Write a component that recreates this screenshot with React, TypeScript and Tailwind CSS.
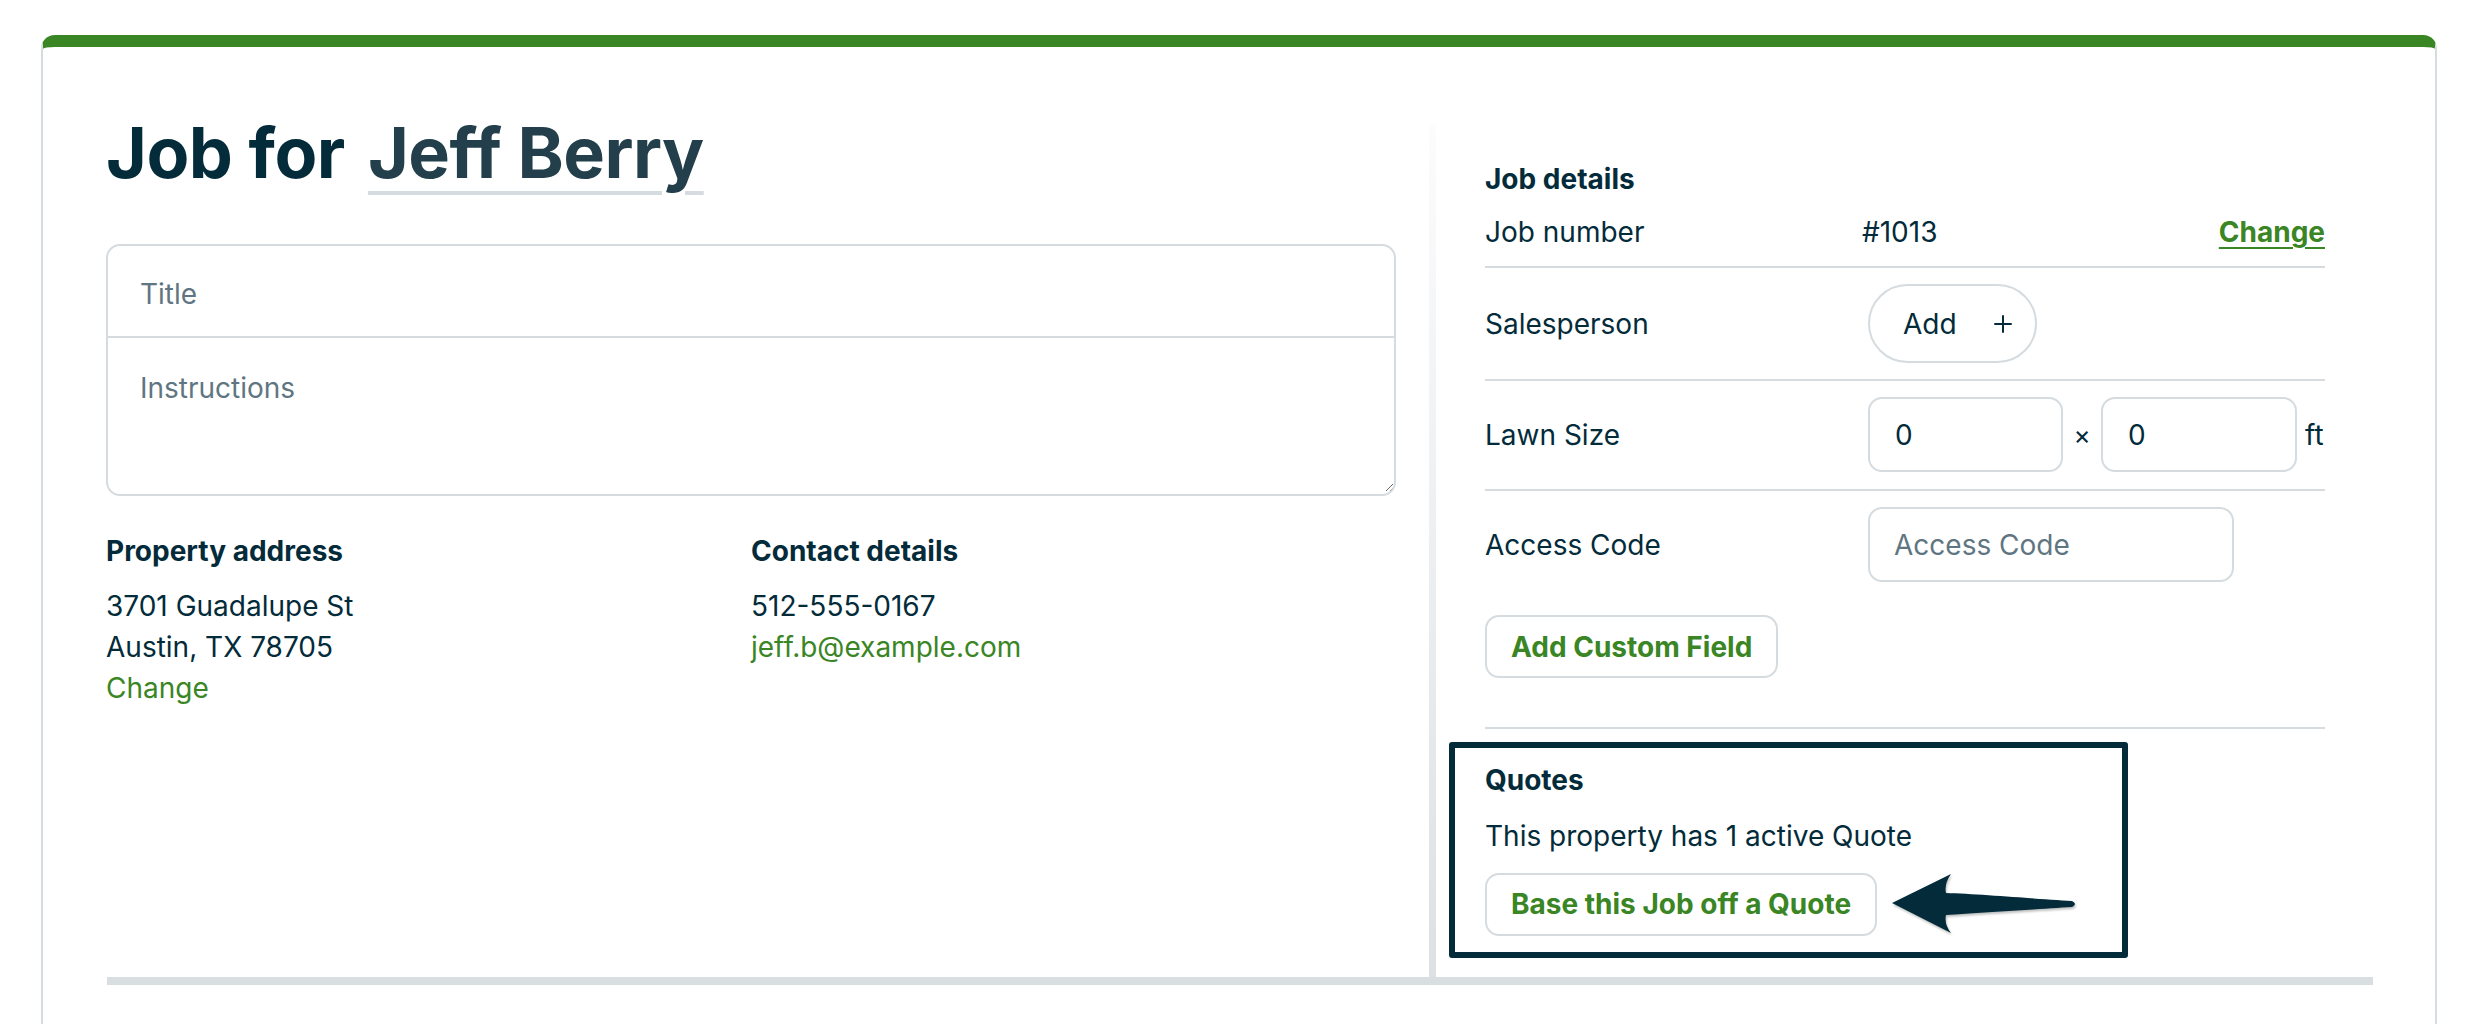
import React from "react";

function Arrow() {
  return (
    <svg width="190" height="64" viewBox="0 0 190 64" className="shrink-0 drop-shadow-[1px_2px_1px_rgba(0,0,0,0.25)]">
      <path
        d="M3 31 L62 2 Q55 12 57 21 C90 22 150 27 183 29 Q189 32 183 35 C150 37 90 41 57 43 Q55 52 62 61 Z"
        fill="#032b3a"
      />
    </svg>
  );
}

function PlusIcon() {
  return (
    <svg width="20" height="20" viewBox="0 0 20 20" className="shrink-0">
      <path d="M10 2 V18 M2 10 H18" stroke="#032b3a" strokeWidth="2" strokeLinecap="round" />
    </svg>
  );
}

export default function App() {
  return (
    <div className="h-[1024px] overflow-hidden bg-white pt-[35px] pl-[41px] pr-[55px] font-[Inter,sans-serif] text-[#032b3a]">
      <div className="min-h-[1100px] rounded-t-[14px] border-x-2 border-t-[12px] border-x-[#d6dbdf] border-t-[#3a8524] bg-white pl-[63px] pr-[62px]">
        <div className="flex">
          {/* Left column */}
          <div className="w-[1290px] shrink-0 pt-[63px]">
            <h1 className="h-[85px] text-[70px] font-bold leading-[85px] tracking-[-0.5px] text-[#032b3a]">
              Job for{" "}
              <span className="ml-[7px] text-[#233f4b] underline decoration-[#d5dbdf] decoration-[4px] underline-offset-[13px]">
                Jeff Berry
              </span>
            </h1>
            <div className="mt-[49px] flex h-[252px] flex-col overflow-hidden rounded-[14px] border-2 border-[#d5dbdf]">
              <input
                placeholder="Title"
                className="h-[92px] w-full shrink-0 border-b-2 border-[#d5dbdf] pl-[32px] pt-[5px] text-[28px] text-[#032b3a] outline-none placeholder:text-[#5f7682]"
              />
              <textarea
                placeholder="Instructions"
                className="h-[154px] w-full px-[32px] pt-[30px] text-[28px] leading-[40px] text-[#032b3a] outline-none placeholder:text-[#5f7682]"
              />
            </div>
            <div className="mt-[35px] grid grid-cols-2 text-[28px] leading-[41px]">
              <div>
                <div className="font-bold">Property address</div>
                <div className="mt-[14px]">3701 Guadalupe St</div>
                <div>Austin, TX 78705</div>
                <div className="text-[#3a8524]">Change</div>
              </div>
              <div>
                <div className="font-bold">Contact details</div>
                <div className="mt-[14px]">512-555-0167</div>
                <div className="text-[#3a8524]">jeff.b@example.com</div>
              </div>
            </div>
          </div>

          <div className="w-[33px] shrink-0" />
          <div className="mt-[78px] w-[7px] shrink-0 bg-gradient-to-b from-[#fcfcfd] to-[#dde1e4]" />

          {/* Right column */}
          <div className="w-[937px] shrink-0 pl-[49px] pr-[48px] pt-[112px] pb-[19px] text-[28px] leading-[40px]">
            <div className="font-bold">Job details</div>

            <div className="flex items-center border-b-2 border-[#d5dbdf] pt-[13px] pb-[14px]">
              <div className="w-[383px] shrink-0">Job number</div>
              <div className="-ml-[6px] flex-1">#1013</div>
              <div className="font-bold text-[#3a8524] underline underline-offset-[5px] decoration-2">Change</div>
            </div>

            <div className="flex items-center border-b-2 border-[#d5dbdf] py-[16px]">
              <div className="w-[383px] shrink-0">Salesperson</div>
              <button className="flex h-[79px] w-[169px] items-center gap-[36px] rounded-full border-2 border-[#d5dbdf] pl-[33px] text-[28px]">
                <span>Add</span>
                <PlusIcon />
              </button>
            </div>

            <div className="flex items-center border-b-2 border-[#d5dbdf] pt-[16px] pb-[17px]">
              <div className="w-[383px] shrink-0">Lawn Size</div>
              <div className="flex h-[75px] w-[195px] items-center rounded-[14px] border-2 border-[#d5dbdf] pl-[25px]">0</div>
              <div className="w-[38px] text-center text-[26px]">×</div>
              <div className="flex h-[75px] w-[196px] items-center rounded-[14px] border-2 border-[#d5dbdf] pl-[25px]">0</div>
              <div className="ml-[8px]">ft</div>
            </div>

            <div className="flex items-center pt-[16px]">
              <div className="w-[383px] shrink-0">Access Code</div>
              <input
                placeholder="Access Code"
                className="h-[75px] w-[366px] rounded-[14px] border-2 border-[#d5dbdf] pl-[24px] text-[28px] outline-none placeholder:text-[#5f7682]"
              />
            </div>

            <button className="mt-[33px] flex h-[63px] items-center rounded-[14px] border-2 border-[#d5dbdf] px-[24px] text-[28px] font-bold text-[#3a8524]">
              Add Custom Field
            </button>

            <div className="mt-[49px] h-[2px] bg-[#d5dbdf]" />

            <div className="mt-[13px] -ml-[36px] w-[679px] rounded-[3px] border-[6px] border-[#032b3a] pl-[30px] pt-[12px] pb-[16px]">
              <div className="font-bold">Quotes</div>
              <div className="mt-[16px]">This property has 1 active Quote</div>
              <div className="mt-[16px] flex items-center">
                <button className="flex h-[63px] items-center rounded-[14px] border-2 border-[#d5dbdf] px-[24px] text-[28px] font-bold text-[#3a8524]">
                  Base this Job off a Quote
                </button>
                <div className="ml-[12px]">
                  <Arrow />
                </div>
              </div>
            </div>
          </div>
        </div>
        <div className="ml-[1px] h-[8px] w-[2266px] bg-[#d9dee1]" />
      </div>
    </div>
  );
}
